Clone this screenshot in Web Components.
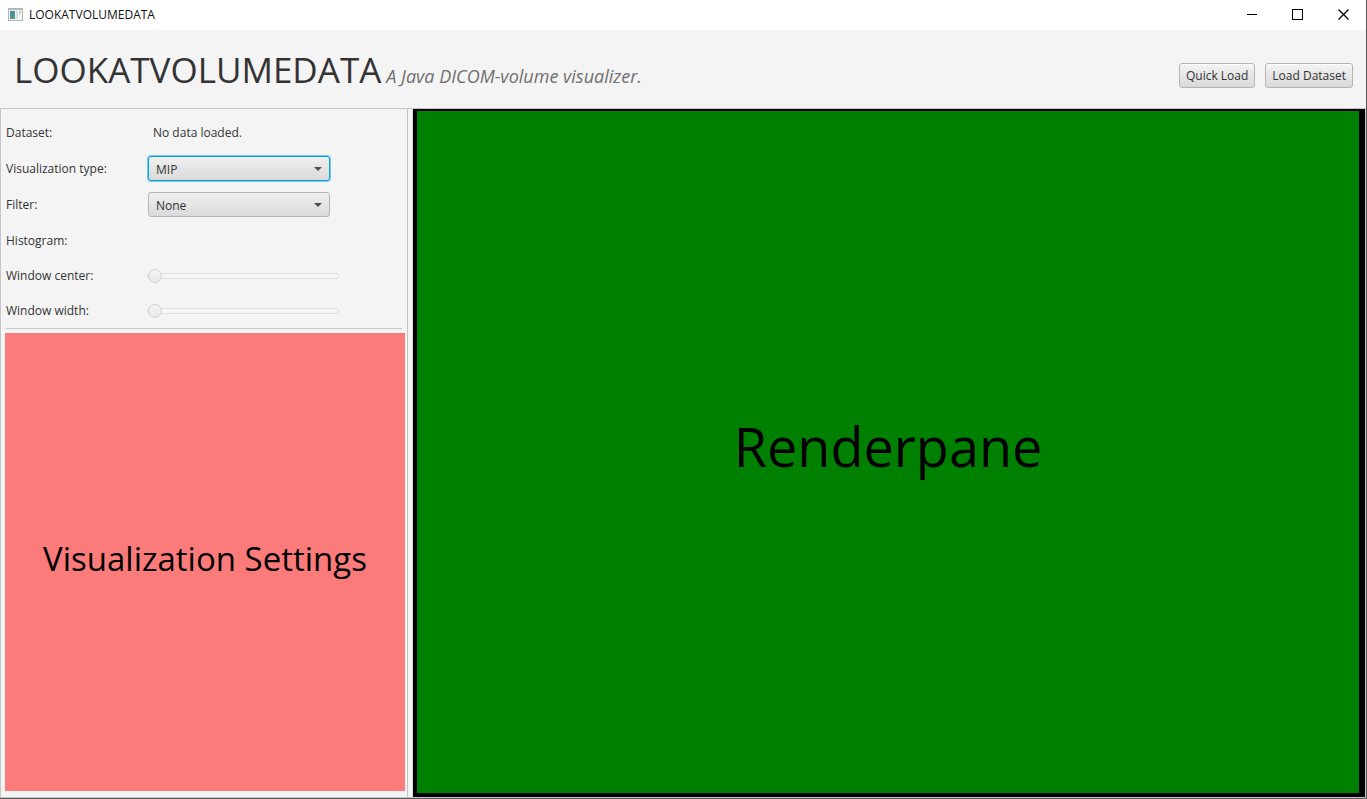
<!DOCTYPE html>
<html lang="en">
<head>
<meta charset="utf-8">
<title>LOOKATVOLUMEDATA</title>
<style>
html, body { height: 100%; margin: 0; }
body { font: 12px/16px "Open Sans", "Noto Sans", sans-serif; color: #333; }
</style>
</head>
<body>
<app-window>
  <title-bar slot="bar">LOOKATVOLUMEDATA</title-bar>
  <app-header slot="header" heading="LOOKATVOLUMEDATA" tagline="A Java DICOM-volume visualizer.">
    <fx-button>Quick Load</fx-button>
    <fx-button>Load Dataset</fx-button>
  </app-header>
  <settings-panel slot="side"></settings-panel>
  <render-pane slot="main">Renderpane</render-pane>
</app-window>

<script>
const define = (name, html, setup) => {
  const template = document.createElement('template');
  template.innerHTML = html;
  customElements.define(name, class extends HTMLElement {
    constructor() {
      super();
      this.attachShadow({ mode: 'open' }).append(template.content.cloneNode(true));
    }
    connectedCallback() { if (setup) setup(this, this.shadowRoot); }
  });
};

define('app-window', `
<style>
:host { display: flex; flex-direction: column; height: 100vh; box-sizing: border-box; background: #f4f4f4; border-right: 1px solid #555; border-bottom: 1px solid #555; }
.split { flex: 1; display: flex; min-height: 0; border: 1px solid #c6c6c6; }
.divider { width: 6px; box-sizing: border-box; border-left: 1px solid #c4c4c4; background: linear-gradient(90deg, #f0f0f0, #fafafa 60%, #d0d0d0); }
.side { flex: 0 0 406px; display: flex; }
.main { flex: 1; display: flex; min-width: 0; }
::slotted(*) { flex: 1; min-width: 0; }
::slotted([slot="bar"]), ::slotted([slot="header"]) { flex: none; }
</style>
<slot name="bar"></slot>
<slot name="header"></slot>
<div class="split">
  <div class="side"><slot name="side"></slot></div>
  <div class="divider"></div>
  <div class="main"><slot name="main"></slot></div>
</div>`);

define('title-bar', `
<style>
:host { display: flex; align-items: center; height: 30px; background: #fff; color: #111; }
.icon { width: 16px; height: 14px; margin: 0 6px 0 7px; }
.name { flex: 1; }
button { width: 46px; height: 30px; padding: 0 0 2px; border: 0; background: none; display: grid; place-items: center; }
button svg { width: 11px; height: 11px; fill: none; stroke: #000; }
</style>
<svg class="icon" viewBox="0 0 16 14">
  <defs><linearGradient id="g" x2="0" y2="1"><stop stop-color="#4a87a8"/><stop offset="1" stop-color="#4f9f80"/></linearGradient></defs>
  <rect x="1" y="0" width="15" height="13" fill="#b3b3b8"/>
  <rect x="2" y="2" width="13" height="10" fill="#f5f5f7"/>
  <rect x="3" y="3" width="5" height="8" fill="url(#g)"/>
  <rect x="9" y="3" width="2" height="8" fill="#d5e2e3"/>
  <path d="M12 3h2v2h-1v2h-1z" fill="#bcd3cb"/>
</svg>
<span class="name"><slot></slot></span>
<button aria-label="Minimize"><svg viewBox="0 0 11 11"><path d="M1 5.5h10"/></svg></button>
<button aria-label="Maximize"><svg viewBox="0 0 11 11"><rect x=".5" y=".5" width="10" height="10"/></svg></button>
<button aria-label="Close"><svg viewBox="0 0 11 11"><path d="M.5 .5l10 10M10.500 .5l-10 10" stroke-width="1.3"/></svg></button>`);

define('app-header', `
<style>
:host { display: flex; align-items: center; height: 78px; padding: 0 13px 0 14px; box-sizing: border-box; background: #f4f4f4; }
.titles { flex: 1; display: flex; align-items: baseline; gap: 5px; padding-top: 2px; }
h1 { margin: 0; font-size: 35px; line-height: 48px; font-weight: 400; }
p { margin: 0; font-size: 18px; line-height: 24px; font-style: italic; color: #707070; }
.actions { display: flex; gap: 10px; padding-top: 12px; }
</style>
<div class="titles"><h1></h1><p></p></div>
<div class="actions"><slot></slot></div>`, (el, root) => {
  root.querySelector('h1').textContent = el.getAttribute('heading');
  root.querySelector('p').textContent = el.getAttribute('tagline');
});

define('fx-button', `
<style>
:host { display: block; }
button { display: block; height: 25px; padding: 2px 6px 0; border: 1px solid #b5b5b5; border-radius: 3px; background: linear-gradient(#f4f4f4, #d9d9d9); box-shadow: inset 0 1px #fff; font: inherit; color: #333; }
</style>
<button><slot></slot></button>`);

define('form-row', `
<style>
:host { display: grid; grid-template-columns: 142px 1fr; align-items: center; height: 36px; }
:host([compact]) { height: 35px; }
.text { padding-left: 5px; }
.box { position: relative; width: 182px; margin-bottom: 1px; }
select { display: block; appearance: none; width: 100%; height: 25px; padding: 2px 7px 0; border: 1px solid #b5b5b5; border-radius: 3px; background: linear-gradient(#f0f0f0, #dadada); font: inherit; color: #333; outline: none; }
:host([active]) select { border-color: #039ed3; box-shadow: 0 0 0 1px #7ccbe8; }
.arrow { position: absolute; right: 8px; top: 11px; width: 8px; height: 4px; background: #4d4d4d; clip-path: polygon(0 0, 100% 0, 50% 100%); pointer-events: none; }
input { display: block; appearance: none; width: 192px; height: 14px; margin: 0 0 0 -1px; background: none; opacity: 1; }
input::-webkit-slider-runnable-track { height: 6px; box-sizing: border-box; border: 1px solid #dedede; border-radius: 3px; background: #f7f7f7; }
input::-webkit-slider-thumb { appearance: none; width: 14px; height: 14px; margin-top: -5px; box-sizing: border-box; border: 1px solid #d2d2d2; border-radius: 50%; background: linear-gradient(#f4f4f4, #e8e8e8); }
</style>
<label for="field"></label>
<div class="value"></div>`, (el, root) => {
  root.querySelector('label').textContent = el.getAttribute('label');
  const value = root.querySelector('.value');
  const kind = el.getAttribute('kind');
  const text = el.getAttribute('value') || '';
  if (kind === 'select') {
    value.innerHTML = '<div class="box"><select id="field"><option></option></select><span class="arrow"></span></div>';
    value.querySelector('option').textContent = text;
  } else if (kind === 'range') {
    value.innerHTML = '<input id="field" type="range" min="0" max="100" value="0" disabled>';
  } else {
    value.innerHTML = '<output id="field" class="text"></output>';
    value.firstChild.textContent = text;
  }
});

define('settings-panel', `
<style>
:host { display: flex; flex-direction: column; box-sizing: border-box; padding: 6px 2px 6px 4px; }
form { padding-left: 1px; }
hr { margin: 0 3px 4px 1px; border: 0; height: 1px; background: #c8c8c8; }
viz-settings { flex: 1; }
</style>
<form>
  <form-row label="Dataset:" value="No data loaded."></form-row>
  <form-row label="Visualization type:" kind="select" value="MIP" active></form-row>
  <form-row label="Filter:" kind="select" value="None"></form-row>
  <form-row label="Histogram:" compact></form-row>
  <form-row label="Window center:" kind="range" compact></form-row>
  <form-row label="Window width:" kind="range" compact></form-row>
</form>
<hr>
<viz-settings>Visualization Settings</viz-settings>`);

define('viz-settings', `
<style>
:host { display: grid; place-items: center; box-sizing: border-box; padding-bottom: 6px; background: #fb7b7b; color: #000; font-size: 33px; line-height: 44px; }
</style>
<span><slot></slot></span>`);

define('render-pane', `
<style>
:host { display: grid; place-items: center; box-sizing: border-box; padding-bottom: 12px; background: #008000; border: solid #000; border-width: 2px 6px 4px 4px; color: #000; font-size: 54px; line-height: 72px; }
</style>
<span><slot></slot></span>`);
</script>
</body>
</html>
